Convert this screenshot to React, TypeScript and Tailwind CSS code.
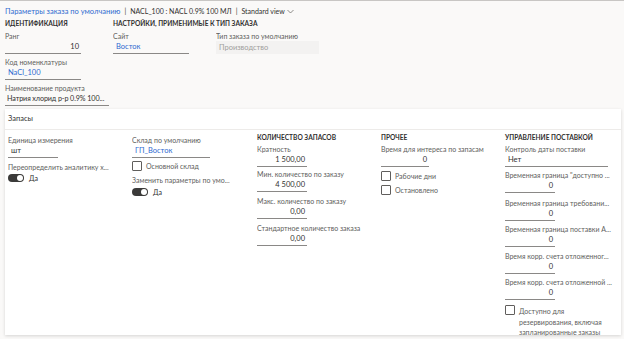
import React from "react";

const font = { fontFamily: 'Lato, "Noto Sans", sans-serif' };

function Label({ children }: { children: React.ReactNode }) {
  return <div className="h-[10px] leading-[10px] text-[7px] text-[#605e5c] whitespace-nowrap overflow-hidden">{children}</div>;
}

function Field({
  label,
  value,
  width = "w-[50px]",
  align = "right",
  link = false,
  gap = "mb-[3px]",
  tight = false,
}: {
  label: string;
  value: string;
  width?: string;
  align?: "left" | "right";
  link?: boolean;
  gap?: string;
  tight?: boolean;
}) {
  const alignCls = align === "right" ? "justify-end pr-[2px]" : tight ? "justify-start pl-[2px]" : "justify-start pl-[3px]";
  return (
    <div className={gap}>
      <Label>{label}</Label>
      <div
        className={`${width} h-[13px] flex items-center ${alignCls} border-b border-[#8a8886] whitespace-nowrap overflow-hidden ${
          tight ? "text-[7.2px] tracking-[-0.1px]" : "text-[7.5px]"
        } ${link ? "text-[#2f6bd0]" : "text-[#323130]"}`}
      >
        {value}
      </div>
    </div>
  );
}

function Toggle() {
  return (
    <div className="flex items-center gap-[5px] h-[12px]">
      <div className="w-[16px] h-[8px] rounded-full bg-[#3b3a39] flex items-center justify-end pr-[1px]">
        <div className="w-[6px] h-[6px] rounded-full bg-white" />
      </div>
      <span className="text-[7px] text-[#323130]">Да</span>
    </div>
  );
}

function Check({ label }: { label: string }) {
  return (
    <div className="flex items-center gap-[4px] h-[14px]">
      <div className="w-[10px] h-[10px] border border-[#605e5c] rounded-[1px] bg-white" />
      <span className="text-[7px] text-[#605e5c]">{label}</span>
    </div>
  );
}

function Head({ children }: { children: React.ReactNode }) {
  return <div className="h-[10px] leading-[10px] text-[6.6px] font-bold text-[#323130] whitespace-nowrap">{children}</div>;
}

export default function App() {
  return (
    <div className="w-[624px] h-[339px] bg-[#faf9f8] border-t border-[#c8c6c4] overflow-hidden" style={font}>
      <div className="px-[5px]">
        <div className="h-[17px] pt-[4px] flex items-center text-[7px] text-[#323130] whitespace-nowrap">
          <span className="text-[#2f6bd0] text-[7.5px]">Параметры заказа по умолчанию</span>
          <span className="mx-[4px]">|</span>
          <span>NACL_100 : NACL 0.9% 100 МЛ</span>
          <span className="mx-[4px]">|</span>
          <span>Standard view</span>
          <svg width="7" height="5" viewBox="0 0 7 5" className="ml-[2px]">
            <path d="M0.5 1 L3.5 4 L6.5 1" fill="none" stroke="#605e5c" strokeWidth="0.7" />
          </svg>
        </div>
        <div className="flex">
          <div className="w-[108px]">
            <Head>ИДЕНТИФИКАЦИЯ</Head>
            <div className="mt-[3px]">
              <Field label="Ранг" value="10" width="w-[76px]" />
              <Field label="Код номенклатуры" value="NaCl_100" width="w-[76px]" align="left" link />
              <Field label="Наименование продукта" value="Натрия хлорид р-р 0.9% 100..." width="w-[104px]" align="left" tight />
            </div>
          </div>
          <div className="w-[103px]">
            <Head>НАСТРОЙКИ, ПРИМЕНИМЫЕ К</Head>
            <div className="mt-[3px]">
              <Field label="Сайт" value="Восток" width="w-[76px]" align="left" link />
            </div>
          </div>
          <div className="w-[110px]">
            <Head>ТИП ЗАКАЗА</Head>
            <div className="mt-[3px]">
              <Label>Тип заказа по умолчанию</Label>
              <div className="w-[103px] h-[13px] flex items-center pl-[3px] bg-[#f3f2f1] text-[7.5px] text-[#a19f9d]">
                Производство
              </div>
            </div>
          </div>
        </div>
      </div>

      <div className="ml-[5px] mr-[3px] h-[226px] bg-white shadow-[0_1px_3px_rgba(0,0,0,0.15)]">
        <div className="h-[21px] px-[3px] flex items-center border-b border-[#edebe9] text-[7.5px] text-[#323130]">
          Запасы
        </div>
        <div className="flex px-[3px] pt-[2px]">
          <div className="w-[124px] pt-[3px]">
            <Field label="Единица измерения" value="шт" width="w-[50px]" align="left" gap="mb-[4px]" />
            <Label>Переопределить аналитику х...</Label>
            <Toggle />
          </div>
          <div className="w-[125px] pt-[3px]">
            <Field label="Склад по умолчанию" value="ГП_Восток" width="w-[78px]" align="left" link gap="mb-[1px]" />
            <Check label="Основной склад" />
            <div className="mt-[2px]">
              <Label>Заменить параметры по умо...</Label>
            </div>
            <div className="mt-[1px]">
              <Toggle />
            </div>
          </div>
          <div className="w-[124px]">
            <Head>КОЛИЧЕСТВО ЗАПАСОВ</Head>
            <div className="mt-[2px]">
              <Field label="Кратность" value="1 500,00" gap="mb-[2px]" />
              <Field label="Мин. количество по заказу" value="4 500,00" gap="mb-[4px]" />
              <Field label="Макс. количество по заказу" value="0,00" gap="mb-[4px]" />
              <Field label="Стандартное количество заказа" value="0,00" />
            </div>
          </div>
          <div className="w-[124px]">
            <Head>ПРОЧЕЕ</Head>
            <div className="mt-[2px]">
              <Field label="Время для интереса по запасам" value="0" width="w-[48px]" gap="mb-[2px]" />
              <Check label="Рабочие дни" />
              <Check label="Остановлено" />
            </div>
          </div>
          <div className="flex-1">
            <Head>УПРАВЛЕНИЕ ПОСТАВКОЙ</Head>
            <div className="mt-[2px]">
              <Field label="Контроль даты поставки" value="Нет" width="w-[103px]" align="left" />
              <Field label="Временная граница &quot;доступно ..." value="0" gap="mb-[5px]" />
              <Field label="Временная граница требовани..." value="0" />
              <Field label="Временная граница поставки А..." value="0" gap="mb-[4px]" />
              <Field label="Время корр. счета отложенног..." value="0" />
              <Field label="Время корр. счета отложенной ..." value="0" gap="mb-[5px]" />
              <div className="flex gap-[4px]">
                <div className="w-[10px] h-[10px] border border-[#605e5c] rounded-[1px] bg-white shrink-0" />
                <div className="text-[7px] leading-[10.5px] text-[#605e5c] pt-[1px]">
                  Доступно для
                  <br />
                  резервирования, включая
                  <br />
                  запланированные заказы
                </div>
              </div>
            </div>
          </div>
        </div>
      </div>
    </div>
  );
}
